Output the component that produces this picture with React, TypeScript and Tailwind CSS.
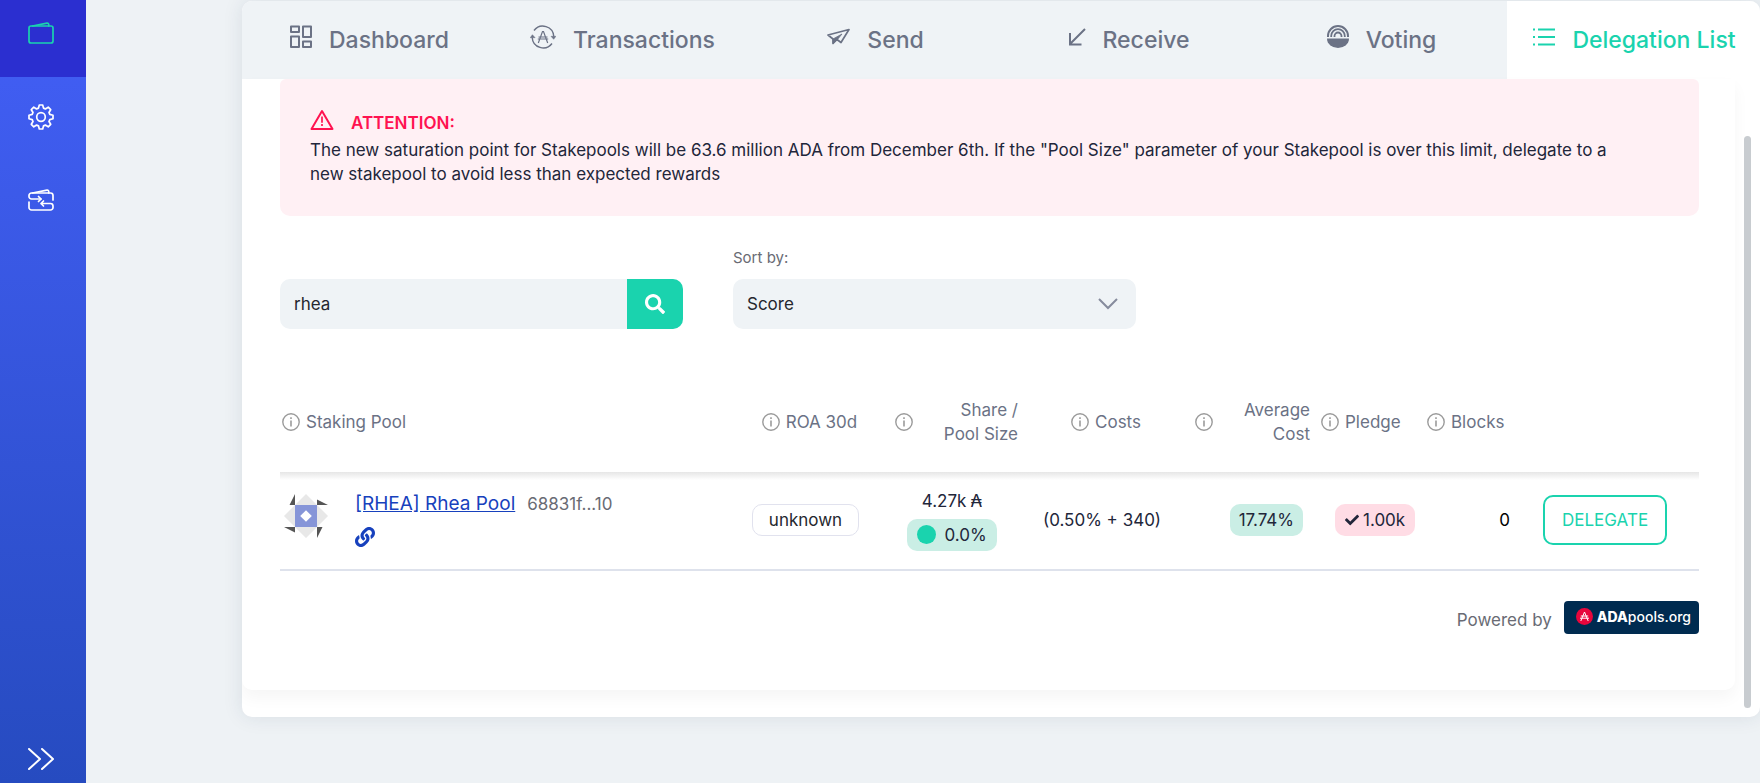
import React, { useState } from "react";
import { FaCheck, FaLink, FaSearch } from "react-icons/fa";

function WalletIcon() {
  return (
    <svg width="26" height="22" viewBox="0 0 26 22" fill="none" stroke="currentColor" strokeWidth="1.7" strokeLinecap="round" strokeLinejoin="round">
      <rect x="1" y="4" width="24" height="17" rx="2" />
      <path d="M4.5 4 19 1.1c1-.2 1.600.4 1.700 1.200V4" />
    </svg>
  );
}

function TransferWalletIcon() {
  return (
    <svg width="26" height="22" viewBox="0 0 26 22" fill="none" stroke="currentColor" strokeWidth="1.700" strokeLinecap="round" strokeLinejoin="round">
      <path d="M13 10H3.500A2.500 2.500 0 0 1 1 7.500v-1A2.500 2.500 0 0 1 3.500 4h19A2.500 2.500 0 0 1 25 6.500V11" />
      <path d="M4.500 4 19 1.100c1-.2 1.600.4 1.700 1.200V4M10.500 7.500 13 10l-2.500 2.500" />
      <path d="M1 13v5.500A2.500 2.500 0 0 0 3.500 21h19a2.500 2.500 0 0 0 2.500-2.500v-1.500a2.500 2.500 0 0 0-2.500-2.500H13M15.500 12 13 14.500l2.500 2.500" />
    </svg>
  );
}

function GearIcon() {
  return (
    <svg width="26" height="26" viewBox="0 0 26 26" fill="none" stroke="currentColor" strokeWidth="1.700" strokeLinejoin="round">
      <circle cx="13" cy="13" r="4.300" />
      <path d="M11.300 1h3.400l.8 3.100 1.900.8 2.800-1.700 2.500 2.500L21 8.500l.8 1.900 3.200.9v3.400l-3.200.9-.8 1.900 1.700 2.800-2.500 2.500-2.800-1.700-1.900.8-.8 3.100h-3.400l-.8-3.100-1.900-.8-2.800 1.700-2.500-2.500L5 17.500l-.8-1.900L1 14.700v-3.400l3.200-.9.8-1.900-1.700-2.800 2.500-2.500 2.800 1.700 1.900-.8z" />
    </svg>
  );
}

function DashboardIcon() {
  return (
    <svg width="22" height="24" viewBox="0 0 22 24" fill="none" stroke="currentColor" strokeWidth="2" strokeLinejoin="round">
      <rect x="1" y="1.500" width="8" height="5.500" />
      <rect x="13" y="1.500" width="8" height="10.500" />
      <rect x="1" y="11.500" width="8" height="10.500" />
      <rect x="13" y="16.500" width="8" height="5.500" />
    </svg>
  );
}

function TransactionsIcon() {
  return (
    <svg width="26" height="24" viewBox="0 0 26 24" fill="none" stroke="currentColor" strokeWidth="1.400">
      <path d="M4 5.500A11 11 0 0 1 23.800 11.500M22 18.500A11 11 0 0 1 2.200 12.500" />
      <path d="m21 11.300 2.700 3 2.200-3zM.2 12.700l2.200-3 2.700 3z" fill="currentColor" strokeWidth=".5" />
      <path d="m8.300 18 4.200-11.500h1L17.700 18M8.500 12h9M7.800 14h10.400" strokeWidth="1.200" />
    </svg>
  );
}

function SendIcon() {
  return (
    <svg width="23" height="18" viewBox="0 0 23 18" fill="none" stroke="currentColor" strokeWidth="1.700" strokeLinejoin="round">
      <path d="M1 7 22 1.500 14 14.500l-4-3-4 4V11z" />
      <path d="m6 11 9-5-5 6-4 3.500z" fill="currentColor" strokeWidth=".8" />
    </svg>
  );
}

function ReceiveIcon() {
  return (
    <svg width="18" height="18" viewBox="0 0 18 18" fill="none" stroke="currentColor" strokeWidth="2">
      <path d="M17 1 2 16M2 5v11.500h11.500" />
    </svg>
  );
}

function VotingIcon() {
  return (
    <svg width="22" height="24" viewBox="0 0 22 24" fill="none" stroke="currentColor">
      <path d="M0 13.500h22a11 9.500 0 0 1-22 0z" fill="currentColor" stroke="none" />
      <path d="M1 12V11a10 10 0 0 1 20 0v1" strokeWidth="2" />
      <path d="M4.200 12v-1a6.800 6.800 0 0 1 13.600 0v1" strokeWidth="1.800" />
      <path d="M7.500 12v-1a3.500 3.500 0 0 1 7 0v1" strokeWidth="1.800" />
    </svg>
  );
}

function ListIcon() {
  return (
    <svg width="22" height="18" viewBox="0 0 22 18" fill="none" stroke="currentColor" strokeWidth="2">
      <path d="M0 1.500h2M5 1.500h17M0 9h2M5 9h17M0 16.500h2M5 16.500h17" />
    </svg>
  );
}

function WarningIcon() {
  return (
    <svg width="24" height="22" viewBox="0 0 24 22" fill="none" stroke="currentColor" strokeWidth="2" strokeLinejoin="round">
      <path d="M12 2 22.500 20h-21z" />
      <path d="M12 7.500v6.200M12 15v2" strokeWidth="1.700" />
    </svg>
  );
}

function InfoIcon() {
  return (
    <svg className="shrink-0 text-[#9b9b9b]" width="18" height="18" viewBox="0 0 18 18" fill="none" stroke="currentColor" strokeWidth="1.400">
      <circle cx="9" cy="9" r="8.200" />
      <path d="M9 7.500v6M9 4.200v1.800" strokeWidth="1.600" />
    </svg>
  );
}

function Identicon() {
  return (
    <svg className="shrink-0" width="46" height="46" viewBox="0 0 46 46">
      <path d="M12 12 23 1l11 11zM34 12l11 11-11 11zM34 34 23 45 12 34zM12 34 1 23l11-11z" fill="#e8e8e8" />
      <path d="M12 12H6.500L12 1zM34 12V6.500L45 12zM34 34h5.500L34 45zM12 34v5.500L1 34z" fill="#555" />
      <path d="M12 12h22v22H12z" fill="#8695d8" />
      <path d="m23 17.200 5.800 5.800-5.800 5.800-5.800-5.800z" fill="#fff" />
    </svg>
  );
}

function AdaPoolsMark() {
  return (
    <svg width="17" height="17" viewBox="0 0 17 17" fill="none">
      <circle cx="8.500" cy="8.500" r="8.500" fill="#e8063c" />
      <path d="m4.800 13 3.700-9 3.700 9M4.800 8h7.400M4 10.200h9" stroke="#fff" strokeWidth="1" />
    </svg>
  );
}

const tabs = [
  { label: "Dashboard", icon: <DashboardIcon /> },
  { label: "Transactions", icon: <TransactionsIcon /> },
  { label: "Send", icon: <SendIcon /> },
  { label: "Receive", icon: <ReceiveIcon /> },
  { label: "Voting", icon: <VotingIcon /> },
  { label: "Delegation List", icon: <ListIcon /> },
];

function Sidebar() {
  return (
    <nav aria-label="Main" className="flex w-[86px] shrink-0 flex-col bg-linear-to-b from-[#435ff7] to-[#264bc0] text-white">
      <a href="#wallet" aria-label="Wallet" className="flex h-[77px] items-center justify-center bg-[#2b2fd0] pr-1 pb-3 text-[#1ad3ae]">
        <WalletIcon />
      </a>
      <a href="#settings" aria-label="Settings" className="flex h-20 items-center justify-center pr-1">
        <GearIcon />
      </a>
      <a href="#transfer" aria-label="Transfer" className="flex h-[85px] items-center justify-center pr-1">
        <TransferWalletIcon />
      </a>
      <button type="button" aria-label="Expand" className="mt-auto flex h-12 items-center justify-center pr-1">
        <svg width="26" height="22" viewBox="0 0 26 22" fill="none" stroke="currentColor" strokeWidth="2" strokeLinecap="round" strokeLinejoin="round">
          <path d="m1 1 11 10L1 21M14 1l11 10-11 10" />
        </svg>
      </button>
    </nav>
  );
}

function Heading({ children, className = "" }: { children: React.ReactNode; className?: string }) {
  return (
    <div className={`flex items-center gap-[6px] ${className}`}>
      <InfoIcon />
      <span>{children}</span>
    </div>
  );
}

function PoolTable() {
  return (
    <table className="mt-12 w-full table-fixed border-collapse">
      <colgroup>
        <col />
        <col className="w-[135px]" />
        <col className="w-[158px]" />
        <col className="w-[142px]" />
        <col className="w-[142px]" />
        <col className="w-[108px]" />
        <col className="w-[92px]" />
        <col className="w-[184px]" />
      </colgroup>
      <thead className="text-[#6b7285]">
        <tr className="h-[95px] *:p-0 *:pb-[6px] *:font-normal">
          <th scope="col"><Heading className="pl-[2px]">Staking Pool</Heading></th>
          <th scope="col"><Heading className="justify-center pl-2">ROA 30d</Heading></th>
          <th scope="col"><Heading className="justify-between pr-[13px] pl-[22px] text-right">Share /<br />Pool Size</Heading></th>
          <th scope="col"><Heading className="justify-center pl-2">Costs</Heading></th>
          <th scope="col"><Heading className="justify-between pr-[5px] pl-[22px] text-right">Average<br />Cost</Heading></th>
          <th scope="col"><Heading className="pl-[6px]">Pledge</Heading></th>
          <th scope="col"><Heading className="pl-1">Blocks</Heading></th>
          <td />
        </tr>
      </thead>
      <tbody>
        <tr className="h-[98px] border-b-2 border-[#dee2ec] bg-linear-to-b from-[#e6e6e6] to-transparent bg-[length:100%_8px] bg-no-repeat text-center *:p-0 *:pb-[2px]">
          <td className="text-left">
            <div className="flex items-start gap-[26px] pl-[3px]">
              <Identicon />
              <div>
                <div className="flex items-center gap-3">
                  <a href="#rhea" className="text-[19px] leading-[22px] text-[#1741bd] underline">[RHEA] Rhea Pool</a>
                  <span className="leading-[22px] text-[#696b74]">68831f...10</span>
                </div>
                <a href="#rhea-site" aria-label="Pool website" className="mt-3 block w-5 text-[20px] text-[#1741bd]"><FaLink /></a>
              </div>
            </div>
          </td>
          <td>
            <span className="inline-block rounded-[10px] border border-[#e1e2ee] px-4 leading-[30px] text-[#25272e]">unknown</span>
          </td>
          <td>
            <div className="pt-1">4.27k<span className="ml-1">₳</span></div>
            <div className="mt-[6px] mb-1 inline-flex h-8 items-center gap-2 rounded-[10px] bg-[#caeee5] px-[10px]">
              <span className="size-[19px] rounded-full bg-[#1ad3ae]" />
              0.0%
            </div>
          </td>
          <td>(0.50% + 340)</td>
          <td className="text-right">
            <span className="mr-3 inline-block rounded-[10px] bg-[#caeee5] px-[9px] leading-8">17.74%</span>
          </td>
          <td className="text-left">
            <span className="ml-5 inline-flex h-8 items-center gap-1 rounded-[10px] bg-[#ffdce5] px-[10px]">
              <FaCheck className="size-[14px]" />1.00k
            </span>
          </td>
          <td className="text-right"><span className="pr-[5px] text-black">0</span></td>
          <td className="text-left">
            <button type="button" className="ml-7 h-[50px] rounded-[10px] border-2 border-[#1ad3ae] px-[17px] text-[#1ad3ae]">DELEGATE</button>
          </td>
        </tr>
      </tbody>
    </table>
  );
}

export default function App() {
  const [query, setQuery] = useState("rhea");
  return (
    <div className="flex min-h-screen overflow-hidden bg-[#eef2f5] font-['Inter',sans-serif] text-[17px] leading-6 text-[#22263a]">
      <Sidebar />
      <main className="min-w-0 flex-1 pt-px pb-[66px] pl-[156px]">
        <div className="overflow-hidden rounded-[10px] bg-white shadow-[0_0_20px_rgba(30,50,80,0.1)]">
          <nav aria-label="Wallet sections" className="grid grid-cols-6 bg-[#eff3f6] text-[23px] font-medium text-[#6b7285]">
            {tabs.map(({ label, icon }) => (
              <a
                key={label}
                href={`#${label}`}
                className="flex h-[78px] items-center justify-center gap-[17px] pl-[2px] whitespace-nowrap aria-[current=page]:bg-white aria-[current=page]:text-[#1ad3ae]"
                aria-current={label === "Delegation List" ? "page" : undefined}
              >
                <span className="pb-[6px]">{icon}</span>
                <span>{label}</span>
              </a>
            ))}
          </nav>
          <div className="relative pr-[25px] pb-[27px]">
            <section className="rounded-b-[10px] bg-white pr-9 pb-14 pl-[38px] shadow-[0_8px_16px_rgba(0,0,0,0.04)]">
              <div role="alert" className="rounded-t-md rounded-b-[10px] bg-[#fff0f4] py-[30px] pr-16 pl-[30px]">
                <div className="flex h-[29px] items-start gap-[17px] text-[#ff1350]">
                  <WarningIcon />
                  <strong className="pt-[2px] font-semibold">ATTENTION:</strong>
                </div>
                <p>
                  The new saturation point for Stakepools will be 63.6 million ADA from December 6th. If the "Pool Size" parameter of your Stakepool is over this limit, delegate to a new stakepool to avoid less than expected rewards
                </p>
              </div>
              <form className="mt-[30px] flex items-end gap-[50px]" onSubmit={(e) => e.preventDefault()}>
                <div className="flex h-[50px] w-[403px] overflow-hidden rounded-[10px] bg-[#eff3f6]">
                  <input
                    aria-label="Search pools"
                    className="min-w-0 flex-1 px-[14px] text-[#25272e] outline-none"
                    value={query}
                    onChange={(e) => setQuery(e.target.value)}
                  />
                  <button type="submit" aria-label="Search" className="flex w-14 items-center justify-center bg-[#1ad3ae] text-[20px] text-white">
                    <FaSearch />
                  </button>
                </div>
                <div className="w-[403px]">
                  <label htmlFor="sort" className="mb-[9px] block text-[15px] text-[#696b74]">Sort by:</label>
                  <div className="relative">
                    <select id="sort" className="h-[50px] w-full appearance-none rounded-[10px] bg-[#eff3f6] px-[14px] text-[#25272e] outline-none">
                      <option>Score</option>
                    </select>
                    <svg className="pointer-events-none absolute top-[19px] right-[18px] text-[#868b9d]" width="20" height="12" viewBox="0 0 20 12" fill="none" stroke="currentColor" strokeWidth="2">
                      <path d="m1 1 9 9 9-9" />
                    </svg>
                  </div>
                </div>
              </form>
              <PoolTable />
              <div className="mt-[30px] flex items-center justify-end gap-3 text-[#696b74]">
                <span className="pt-1">Powered by</span>
                <a href="#adapools" className="flex h-[33px] items-center gap-1 rounded-[4px] bg-[#002b50] pr-2 pb-[2px] pl-3 text-[14px] font-medium text-white">
                  <AdaPoolsMark />
                  <span><b className="font-extrabold">ADA</b>pools.org</span>
                </a>
              </div>
            </section>
            <div className="absolute top-[57px] right-[9px] bottom-[9px] w-[7px] rounded-full bg-[#c8ccd0]" />
          </div>
        </div>
      </main>
    </div>
  );
}
